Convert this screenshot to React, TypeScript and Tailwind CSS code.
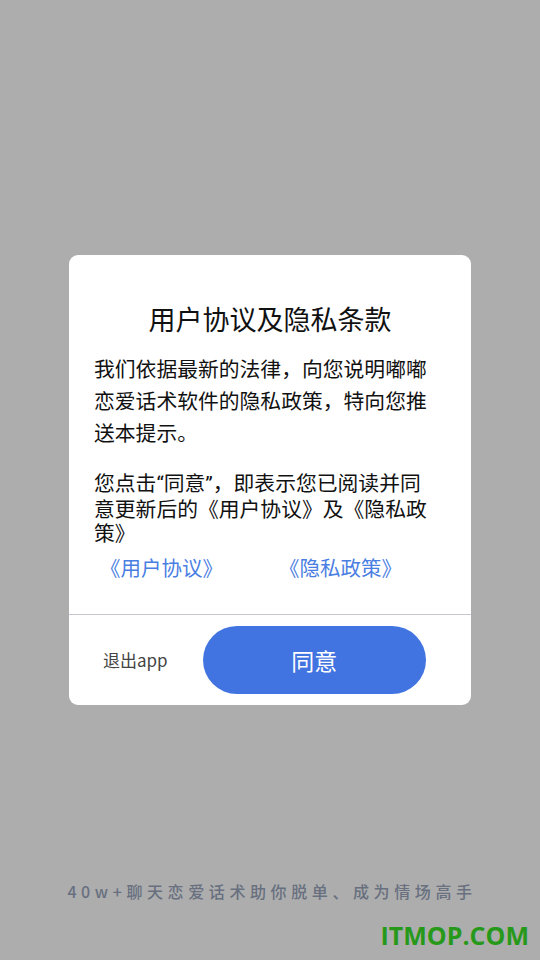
const font = { fontFamily: '"Noto Sans CJK SC", "Noto Sans", sans-serif' }
const latin = { fontFamily: 'Roboto, "Liberation Sans", sans-serif' }

export default function App() {
  return (
    <div
      style={font}
      className="relative flex h-[960px] w-[540px] flex-col items-center overflow-hidden bg-[#adadad] pt-[255px]"
    >
      <div className="w-[402px] rounded-[9px] bg-white">
        <h1 className="pt-[46px] text-center text-[27px] leading-[36px] text-[#111]">
          用户协议及隐私条款
        </h1>
        <div className="px-[25px]">
          <p className="mt-[15px] text-[20.8px] leading-[32px] text-[#111]">
            我们依据最新的法律，向您说明嘟嘟恋爱话术软件的隐私政策，特向您推送本提示。
          </p>
          <p className="mt-[22px] text-[20.8px] leading-[24px] text-[#111]">
            您点击<span style={latin}>“</span>同意<span style={latin}>”</span>，即表示您已阅读并同
            <br />
            意更新后的《用户协议》及《隐私政
            <br />
            策》
          </p>
          <div className="mt-[11px] flex text-[20.5px] leading-[24px] text-[#4a7ee2]">
            <span className="ml-[6px]">《用户协议》</span>
            <span className="ml-[56px]">《隐私政策》</span>
          </div>
        </div>
        <div className="mt-[35px] h-px bg-[#c6c6d2]" />
        <div className="flex items-center pb-[11px] pl-[34px] pr-[45px] pt-[11px]">
          <span className="text-[17px] text-[#444]">退出app</span>
          <button className="ml-[35px] flex h-[68px] w-[223px] items-center justify-center rounded-full bg-[#4174e1] text-[23px] text-white">
            同意
          </button>
        </div>
      </div>
      <p className="mt-auto mb-[57px] ml-[4px] text-[16px] font-medium leading-[24px] tracking-[4.6px] text-[#687080]">
        40w+聊天恋爱话术助你脱单、成为情场高手
      </p>
      <span
        style={{ fontFamily: '"Open Sans", "Liberation Sans", sans-serif' }}
        className="absolute bottom-[9px] right-[11px] text-[25px] font-bold leading-[32px] text-[#27991a]"
      >
        ITMOP.COM
      </span>
    </div>
  )
}
